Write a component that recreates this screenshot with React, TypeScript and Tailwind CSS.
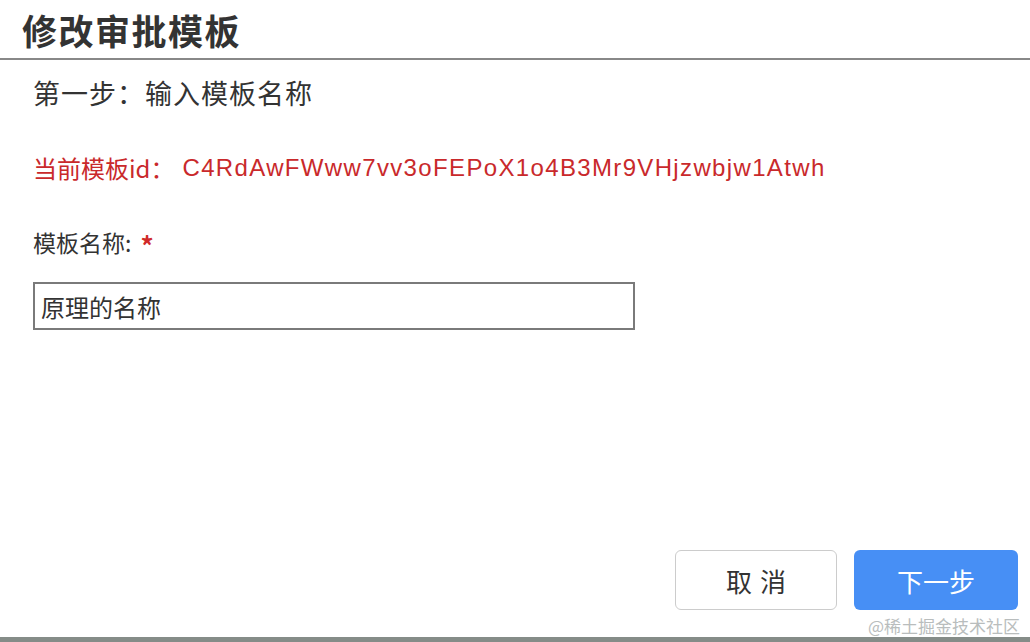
export default function App() {
  const font = { fontFamily: '"Noto Sans CJK SC", "Noto Sans", sans-serif' };
  return (
    <div className="w-[1030px] h-[642px] bg-white flex flex-col overflow-hidden" style={font}>
      <div className="h-[60px] border-b-2 border-[#888888] flex items-center pl-[22px]">
        <h1 className="text-[35px] font-bold text-[#333333] leading-none tracking-[1.5px]">修改审批模板</h1>
      </div>

      <div className="flex-1 flex flex-col pl-[33px]">
        <div className="mt-[15px] h-[34px] flex items-center text-[27px] text-[#333333] leading-none tracking-[1px]">
          第一步：输入模板名称
        </div>

        <div className="mt-[42px] h-[34px] flex items-center text-[24px] text-[#c9292b] leading-none">
          当前模板id：<span className="tracking-[1.35px] ml-[8px]" style={{ fontFamily: '"Liberation Sans", Arial, sans-serif' }}>C4RdAwFWww7vv3oFEPoX1o4B3Mr9VHjzwbjw1Atwh</span>
        </div>

        <div className="mt-[40px] h-[34px] flex items-center text-[23px] text-[#333333] leading-none">
          模板名称:<span className="text-[#d02a2a] text-[26px] ml-[9px] font-bold mt-[6px]">*</span>
        </div>

        <input
          readOnly
          value="原理的名称"
          className="mt-[23px] w-[602px] h-[48px] border-2 border-[#7a7a7a] px-[6px] text-[24px] text-[#333333] outline-none"
          style={font}
        />

        <div className="flex-1" />

        <div className="flex justify-end gap-[17px] pr-[12px] mb-[27px]">
          <button className="w-[162px] h-[60px] rounded-[6px] border border-[#cccccc] bg-white text-[26px] text-[#333333] tracking-[8px] pl-[8px]">
            取消
          </button>
          <button className="w-[164px] h-[60px] rounded-[6px] bg-[#478ff5] text-[26px] text-white">
            下一步
          </button>
        </div>
      </div>

      <div className="relative h-[5px] bg-[#858c88]">
        <span className="absolute right-[10px] bottom-[8px] text-[17px] text-[#b9bdbd] leading-none whitespace-nowrap">@稀土掘金技术社区</span>
      </div>
    </div>
  );
}
